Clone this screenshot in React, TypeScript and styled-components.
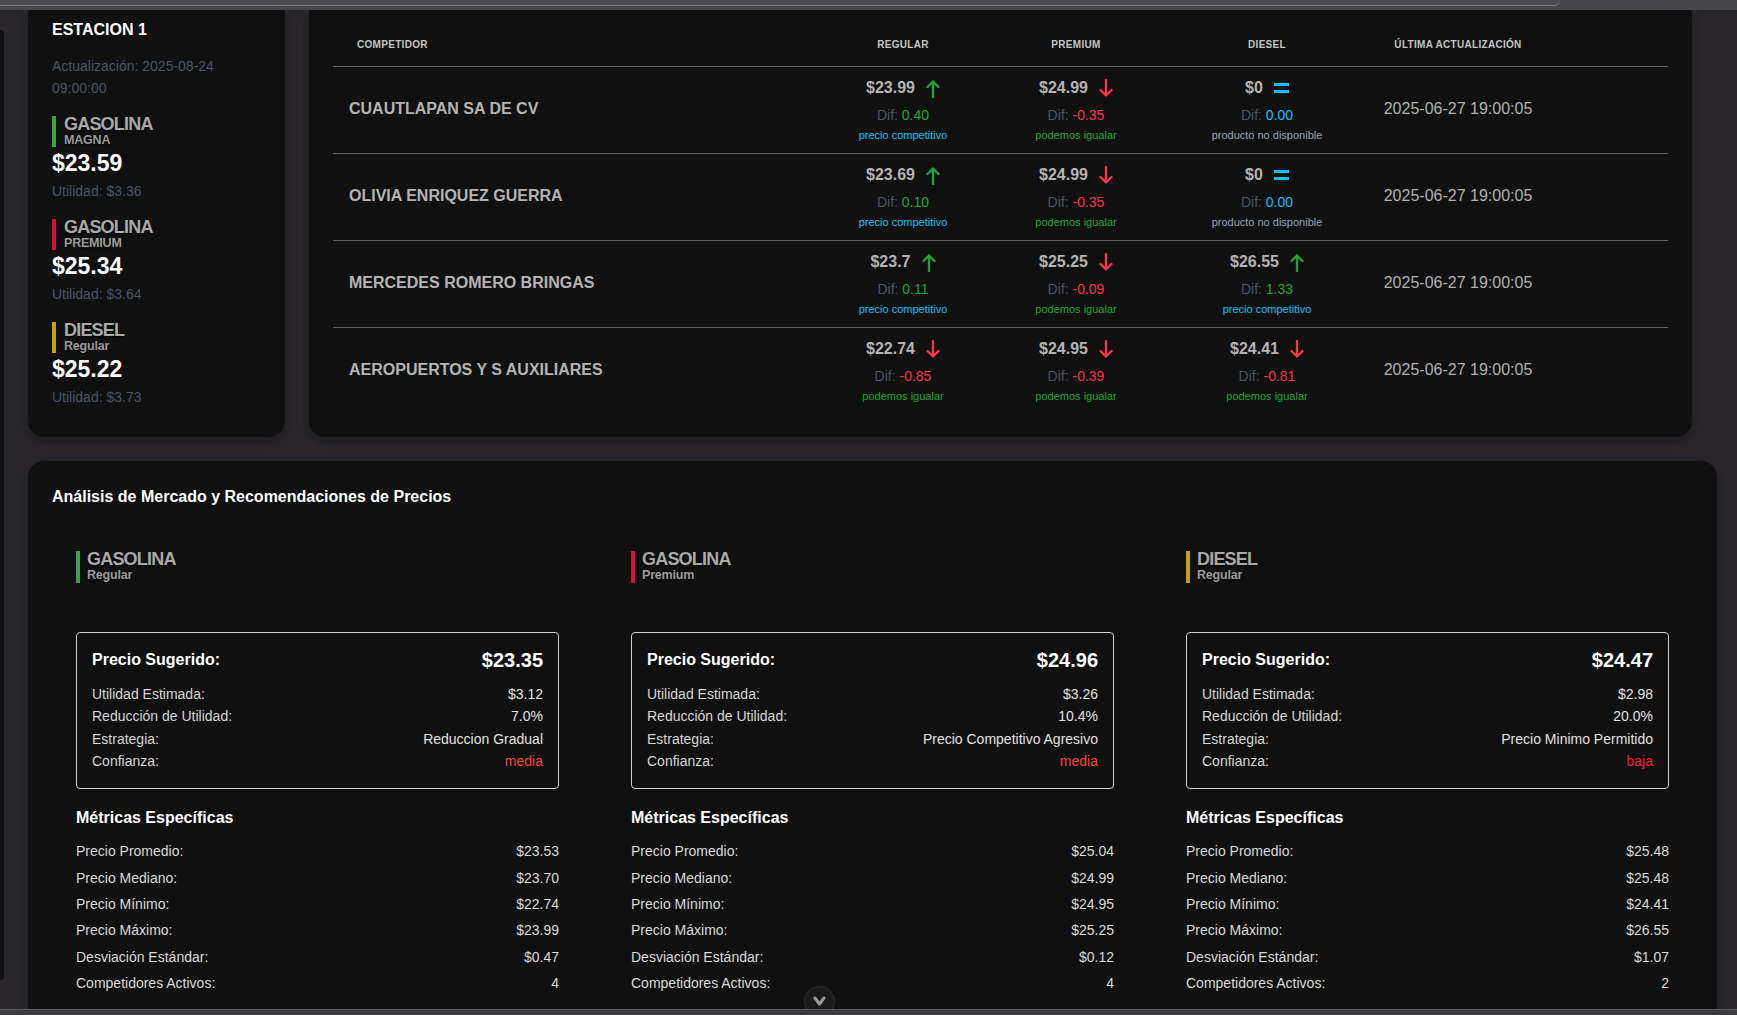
import React from 'react';
import styled, { createGlobalStyle } from 'styled-components';

const GlobalStyle = createGlobalStyle`
  html, body { margin: 0; padding: 0; height: 100%; overflow: hidden; background: #29272b; }
  body { font-family: "Liberation Sans", Arial, sans-serif; }
  #root { height: 100%; }
  *, *::before, *::after { box-sizing: border-box; }
`;

type Trend = 'up' | 'down' | 'eq';
type Status = 'comp' | 'igual' | 'nd';

const GREEN = '#1fa53a';
const RED = '#f8344f';
const CYAN = '#12c0f5';

const trendColor: Record<Trend, string> = { up: GREEN, down: RED, eq: CYAN };
const statusInfo: Record<Status, { text: string; color: string }> = {
  comp: { text: 'precio competitivo', color: CYAN },
  igual: { text: 'podemos igualar', color: GREEN },
  nd: { text: 'producto no disponible', color: '#98a2b3' },
};

/* ---------- page frame ---------- */
const Page = styled.div`
  height: 100vh;
  display: flex;
  flex-direction: column;
  background: #29272b;
`;

const TopBar = styled.header`
  flex: none;
  height: 10px;
  background: #47474b;
  display: flex;
`;

const TopBarField = styled.div`
  width: 1560px;
  height: 6px;
  background: #4b4b4f;
  border-bottom: 1px solid #7a7a7e;
  border-bottom-right-radius: 6px;
`;

const Viewport = styled.div`
  flex: 1;
  min-height: 0;
  overflow: hidden;
  display: flex;
  gap: 24px;
`;

const SideEdge = styled.div`
  flex: none;
  width: 4px;
  height: 950px;
  margin-top: 20px;
  background: #101010;
  border-radius: 0 10px 10px 0;
`;

const Content = styled.main`
  flex: 1;
  min-width: 0;
  display: flex;
  flex-direction: column;
  gap: 24px;
`;

const TopRow = styled.div`
  display: flex;
  gap: 24px;
  padding-right: 45px;
  align-items: stretch;
`;

const BottomBar = styled.footer`
  position: relative;
  z-index: 3;
  flex: none;
  height: 6px;
  background: #3c3c40;
  border-top: 1px solid #5a5a5e;
`;

const ScrollButton = styled.button`
  position: fixed;
  z-index: 2;
  left: 804px;
  top: 986px;
  width: 31px;
  height: 31px;
  border-radius: 50%;
  background: #1a1a1a;
  border: 1px solid #2e2e2e;
  padding: 0;
  display: flex;
  align-items: flex-start;
  justify-content: center;
  padding-top: 9px;
`;

/* ---------- station card ---------- */
const StationCard = styled.aside`
  flex: none;
  width: 257px;
  background: #101010;
  border-radius: 0 0 16px 16px;
  padding: 10px 24px 0;
  box-shadow: 0 4px 12px rgba(0, 0, 0, 0.35);
`;

const StationName = styled.h2`
  margin: 0;
  font-size: 16px;
  line-height: 20px;
  font-weight: 700;
  color: #ffffff;
`;

const UpdatedAt = styled.div`
  margin-top: 15px;
  font-size: 14px;
  line-height: 22px;
  color: #4b5563;
`;

const FuelList = styled.div`
  margin-top: 17px;
  display: flex;
  flex-direction: column;
  gap: 18px;
`;

const FuelItem = styled.div`
  display: flex;
  flex-direction: column;
`;

const FuelTag = styled.div<{ $color: string; $inset: number }>`
  border-left: 4px solid ${(p) => p.$color};
  padding-left: ${(p) => p.$inset}px;
  display: flex;
  flex-direction: column;
`;

const TagTitle = styled.span`
  font-size: 18px;
  line-height: 17px;
  font-weight: 700;
  letter-spacing: -0.8px;
  color: #a9a9a9;
  text-shadow: 0 1px 2px rgba(0, 0, 0, 0.9);
`;

const TagSub = styled.span<{ $lh: number }>`
  font-size: 12.5px;
  line-height: ${(p) => p.$lh}px;
  font-weight: 700;
  letter-spacing: -0.2px;
  color: #9c9c9c;
  text-shadow: 0 1px 2px rgba(0, 0, 0, 0.9);
`;

const StationPrice = styled.div`
  margin-top: 2px;
  font-size: 23px;
  line-height: 28px;
  font-weight: 700;
  color: #ffffff;
`;

const Utility = styled.div`
  margin-top: 4px;
  font-size: 14px;
  line-height: 20px;
  color: #4b5563;
`;

/* ---------- competitor table ---------- */
const COLS = '484px 172px 174px 208px 174px';

const TableCard = styled.section`
  flex: 1;
  min-width: 0;
  background: #101010;
  border-radius: 0 0 16px 16px;
  padding: 13px 24px 23px;
  box-shadow: 0 4px 12px rgba(0, 0, 0, 0.35);
`;

const HeadRow = styled.div`
  display: grid;
  grid-template-columns: ${COLS};
  align-items: center;
  height: 44px;
  border-bottom: 1px solid #5f5f5f;
`;

const HeadCell = styled.div<{ $left?: boolean }>`
  font-size: 10px;
  font-weight: 700;
  letter-spacing: 0.3px;
  text-transform: uppercase;
  color: #c4c4c4;
  text-align: ${(p) => (p.$left ? 'left' : 'center')};
  padding-left: ${(p) => (p.$left ? '24px' : '0')};
`;

const Row = styled.div`
  display: grid;
  grid-template-columns: ${COLS};
  align-items: center;
  padding: 9px 0 11px;
  border-bottom: 1px solid #5f5f5f;
  &:last-child {
    border-bottom: none;
  }
`;

const NameCell = styled.div`
  padding-left: 16px;
  font-size: 16px;
  font-weight: 700;
  color: #b4b4b4;
`;

const PriceCell = styled.div`
  display: flex;
  flex-direction: column;
  align-items: center;
`;

const PriceLine = styled.div`
  display: flex;
  align-items: center;
  gap: 11px;
  height: 24px;
  font-size: 16px;
  font-weight: 700;
  color: #b4b4b4;
`;

const DifLine = styled.div`
  margin-top: 5px;
  font-size: 14px;
  line-height: 20px;
  color: #4b5563;
`;

const DifValue = styled.span<{ $color: string }>`
  color: ${(p) => p.$color};
`;

const StatusLine = styled.div<{ $color: string }>`
  margin-top: 3px;
  font-size: 11px;
  line-height: 14px;
  color: ${(p) => p.$color};
`;

const DateCell = styled.div`
  text-align: center;
  font-size: 16px;
  color: #b0b0b0;
`;

/* ---------- analysis section ---------- */
const AnalysisCard = styled.section`
  margin-right: 20px;
  background: #101010;
  border-radius: 16px;
  padding: 24px;
  box-shadow: 0 4px 12px rgba(0, 0, 0, 0.35);
`;

const SectionTitle = styled.h2`
  margin: 0;
  font-size: 16px;
  line-height: 24px;
  font-weight: 700;
  color: #ffffff;
`;

const FuelGrid = styled.div`
  margin-top: 18px;
  display: grid;
  grid-template-columns: repeat(3, 1fr);
  gap: 24px;
`;

const FuelColumn = styled.div`
  background: #101010;
  border-radius: 12px;
  padding: 24px;
`;

const SuggestBox = styled.div`
  margin-top: 49px;
  border: 1px solid #cfcfcf;
  border-radius: 4px;
  padding: 15px 15px 16px 15px;
`;

const SuggestHead = styled.div`
  display: flex;
  justify-content: space-between;
  align-items: center;
  height: 24px;
  margin-bottom: 11px;
  color: #ffffff;
  font-weight: 700;
`;

const SuggestLabel = styled.span`
  font-size: 16px;
`;

const SuggestPrice = styled.span`
  font-size: 20px;
`;

const InfoRow = styled.div`
  display: flex;
  justify-content: space-between;
  font-size: 14px;
  line-height: 22.3px;
  color: #d6d6d6;
`;

const InfoValue = styled.span<{ $color?: string }>`
  color: ${(p) => p.$color || '#e2e2e2'};
`;

const MetricsTitle = styled.h3`
  margin: 19px 0 0;
  font-size: 16px;
  line-height: 20px;
  font-weight: 700;
  color: #ffffff;
`;

const MetricList = styled.div`
  margin-top: 13px;
  display: flex;
  flex-direction: column;
  gap: 6.4px;
`;

const MetricRow = styled.div`
  display: flex;
  justify-content: space-between;
  font-size: 14px;
  line-height: 20px;
  color: #dadada;
`;

/* ---------- icons ---------- */
const TrendIcon = ({ trend }: { trend: Trend }) => {
  const c = trendColor[trend];
  if (trend === 'eq') {
    return (
      <svg width="15" height="19" viewBox="0 0 15 19">
        <rect x="0" y="4" width="15" height="3" fill={c} />
        <rect x="0" y="11" width="15" height="3" fill={c} />
      </svg>
    );
  }
  const d = trend === 'up' ? 'M7 18V2.5M1.5 8 7 2.5 12.5 8' : 'M7 1v15.5M1.5 11 7 16.5 12.5 11';
  return (
    <svg width="14" height="19" viewBox="0 0 14 19" fill="none" stroke={c} strokeWidth="2.3" strokeLinecap="round" strokeLinejoin="round">
      <path d={d} />
    </svg>
  );
};

const ChevronDown = () => (
  <svg width="13" height="10" viewBox="0 0 13 10" fill="none" stroke="#9a9a9a" strokeWidth="3" strokeLinecap="round" strokeLinejoin="round">
    <path d="M2 2l4.5 6L11 2" />
  </svg>
);

/* ---------- data ---------- */
const stationFuels = [
  { color: '#43a047', title: 'GASOLINA', sub: 'MAGNA', price: '$23.59', util: '$3.36' },
  { color: '#d3123f', title: 'GASOLINA', sub: 'PREMIUM', price: '$25.34', util: '$3.64' },
  { color: '#c2a30c', title: 'DIESEL', sub: 'Regular', price: '$25.22', util: '$3.73' },
];

type PriceInfo = { price: string; trend: Trend; dif: string; status: Status };
type Competitor = { name: string; regular: PriceInfo; premium: PriceInfo; diesel: PriceInfo; date: string };

const competitors: Competitor[] = [
  {
    name: 'CUAUTLAPAN SA DE CV',
    regular: { price: '$23.99', trend: 'up', dif: '0.40', status: 'comp' },
    premium: { price: '$24.99', trend: 'down', dif: '-0.35', status: 'igual' },
    diesel: { price: '$0', trend: 'eq', dif: '0.00', status: 'nd' },
    date: '2025-06-27 19:00:05',
  },
  {
    name: 'OLIVIA ENRIQUEZ GUERRA',
    regular: { price: '$23.69', trend: 'up', dif: '0.10', status: 'comp' },
    premium: { price: '$24.99', trend: 'down', dif: '-0.35', status: 'igual' },
    diesel: { price: '$0', trend: 'eq', dif: '0.00', status: 'nd' },
    date: '2025-06-27 19:00:05',
  },
  {
    name: 'MERCEDES ROMERO BRINGAS',
    regular: { price: '$23.7', trend: 'up', dif: '0.11', status: 'comp' },
    premium: { price: '$25.25', trend: 'down', dif: '-0.09', status: 'igual' },
    diesel: { price: '$26.55', trend: 'up', dif: '1.33', status: 'comp' },
    date: '2025-06-27 19:00:05',
  },
  {
    name: 'AEROPUERTOS Y S AUXILIARES',
    regular: { price: '$22.74', trend: 'down', dif: '-0.85', status: 'igual' },
    premium: { price: '$24.95', trend: 'down', dif: '-0.39', status: 'igual' },
    diesel: { price: '$24.41', trend: 'down', dif: '-0.81', status: 'igual' },
    date: '2025-06-27 19:00:05',
  },
];

const analysis = [
  {
    color: '#43a047', title: 'GASOLINA', sub: 'Regular', price: '$23.35',
    info: [['Utilidad Estimada:', '$3.12'], ['Reducción de Utilidad:', '7.0%'], ['Estrategia:', 'Reduccion Gradual']],
    conf: 'media', confColor: '#f4452f',
    metrics: [['Precio Promedio:', '$23.53'], ['Precio Mediano:', '$23.70'], ['Precio Mínimo:', '$22.74'], ['Precio Máximo:', '$23.99'], ['Desviación Estándar:', '$0.47'], ['Competidores Activos:', '4']],
  },
  {
    color: '#d3123f', title: 'GASOLINA', sub: 'Premium', price: '$24.96',
    info: [['Utilidad Estimada:', '$3.26'], ['Reducción de Utilidad:', '10.4%'], ['Estrategia:', 'Precio Competitivo Agresivo']],
    conf: 'media', confColor: '#f4452f',
    metrics: [['Precio Promedio:', '$25.04'], ['Precio Mediano:', '$24.99'], ['Precio Mínimo:', '$24.95'], ['Precio Máximo:', '$25.25'], ['Desviación Estándar:', '$0.12'], ['Competidores Activos:', '4']],
  },
  {
    color: '#c2a30c', title: 'DIESEL', sub: 'Regular', price: '$24.47',
    info: [['Utilidad Estimada:', '$2.98'], ['Reducción de Utilidad:', '20.0%'], ['Estrategia:', 'Precio Minimo Permitido']],
    conf: 'baja', confColor: '#ec1f41',
    metrics: [['Precio Promedio:', '$25.48'], ['Precio Mediano:', '$25.48'], ['Precio Mínimo:', '$24.41'], ['Precio Máximo:', '$26.55'], ['Desviación Estándar:', '$1.07'], ['Competidores Activos:', '2']],
  },
];

const PriceBlock = ({ p }: { p: PriceInfo }) => {
  const s = statusInfo[p.status];
  return (
    <PriceCell>
      <PriceLine>
        <span>{p.price}</span>
        <TrendIcon trend={p.trend} />
      </PriceLine>
      <DifLine>
        Dif: <DifValue $color={trendColor[p.trend]}>{p.dif}</DifValue>
      </DifLine>
      <StatusLine $color={s.color}>{s.text}</StatusLine>
    </PriceCell>
  );
};

export default function App() {
  return (
    <Page>
      <GlobalStyle />
      <TopBar>
        <TopBarField />
      </TopBar>
      <Viewport>
        <SideEdge />
        <Content>
          <TopRow>
            <StationCard>
              <StationName>ESTACION 1</StationName>
              <UpdatedAt>Actualización: 2025-08-24 09:00:00</UpdatedAt>
              <FuelList>
                {stationFuels.map((f, i) => (
                  <FuelItem key={i}>
                    <FuelTag $color={f.color} $inset={8}>
                      <TagTitle>{f.title}</TagTitle>
                      <TagSub $lh={14}>{f.sub}</TagSub>
                    </FuelTag>
                    <StationPrice>{f.price}</StationPrice>
                    <Utility>Utilidad: {f.util}</Utility>
                  </FuelItem>
                ))}
              </FuelList>
            </StationCard>
            <TableCard>
              <HeadRow>
                <HeadCell $left>Competidor</HeadCell>
                <HeadCell>Regular</HeadCell>
                <HeadCell>Premium</HeadCell>
                <HeadCell>Diesel</HeadCell>
                <HeadCell>Última Actualización</HeadCell>
              </HeadRow>
              {competitors.map((c) => (
                <Row key={c.name}>
                  <NameCell>{c.name}</NameCell>
                  <PriceBlock p={c.regular} />
                  <PriceBlock p={c.premium} />
                  <PriceBlock p={c.diesel} />
                  <DateCell>{c.date}</DateCell>
                </Row>
              ))}
            </TableCard>
          </TopRow>
          <AnalysisCard>
            <SectionTitle>Análisis de Mercado y Recomendaciones de Precios</SectionTitle>
            <FuelGrid>
              {analysis.map((a, i) => (
                <FuelColumn key={i}>
                  <FuelTag $color={a.color} $inset={7}>
                    <TagTitle>{a.title}</TagTitle>
                    <TagSub $lh={15}>{a.sub}</TagSub>
                  </FuelTag>
                  <SuggestBox>
                    <SuggestHead>
                      <SuggestLabel>Precio Sugerido:</SuggestLabel>
                      <SuggestPrice>{a.price}</SuggestPrice>
                    </SuggestHead>
                    {a.info.map(([k, v]) => (
                      <InfoRow key={k}>
                        <span>{k}</span>
                        <InfoValue>{v}</InfoValue>
                      </InfoRow>
                    ))}
                    <InfoRow>
                      <span>Confianza:</span>
                      <InfoValue $color={a.confColor}>{a.conf}</InfoValue>
                    </InfoRow>
                  </SuggestBox>
                  <MetricsTitle>Métricas Específicas</MetricsTitle>
                  <MetricList>
                    {a.metrics.map(([k, v]) => (
                      <MetricRow key={k}>
                        <span>{k}</span>
                        <span>{v}</span>
                      </MetricRow>
                    ))}
                  </MetricList>
                </FuelColumn>
              ))}
            </FuelGrid>
          </AnalysisCard>
        </Content>
      </Viewport>
      <BottomBar />
      <ScrollButton aria-label="Bajar">
        <ChevronDown />
      </ScrollButton>
    </Page>
  );
}
